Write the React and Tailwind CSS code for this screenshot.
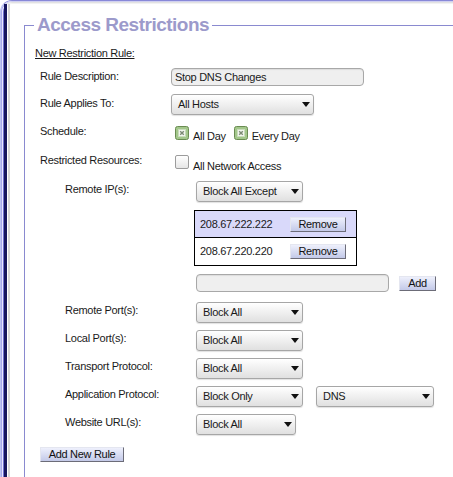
import React from 'react';

function Select({ value, className }) {
  return (
    <div className={`flex items-center h-[21px] rounded-[3px] border border-[#a6a6a6] bg-linear-to-b from-[#ffffff] to-[#e0e0e0] shadow-[0_1px_1px_rgba(0,0,0,0.12)] pl-[6px] text-[#1a1a1a] ${className}`}>
      <span>{value}</span>
      <svg className="ml-auto mr-[3px]" width="8" height="5" viewBox="0 0 8 5">
        <path d="M0 0H8L4 5Z" fill="#111" />
      </svg>
    </div>
  );
}

function CheckedBox() {
  return (
    <svg width="14" height="14" viewBox="0 0 14 14">
      <rect x="0.5" y="0.5" width="13" height="13" rx="2" fill="#a3c78b" stroke="#6a8c52" />
      <rect x="3.5" y="3.5" width="7" height="7" fill="#f3f7ef" stroke="#c9dcbc" />
      <path d="M5.2 5.2L8.8 8.8M8.8 5.2L5.2 8.8" stroke="#7c8a74" strokeWidth="1.4" />
    </svg>
  );
}

function Btn({ children, className }) {
  return (
    <div className={`flex items-center justify-center h-[15px] border border-t-[#e4e6f0] border-l-[#e4e6f0] border-r-[#6c6c78] border-b-[#6c6c78] bg-linear-to-b from-[#eef0fc] to-[#c3c9e8] text-[#111] leading-none ${className}`}>
      {children}
    </div>
  );
}

function Label({ children, className = '' }) {
  return <div className={`w-[131px] shrink-0 leading-[14px] ${className}`}>{children}</div>;
}

export default function App() {
  return (
    <div className="h-[477px] w-[453px] overflow-hidden bg-white font-['Liberation_Sans',Arial,sans-serif] text-[11px] tracking-[-0.3px] text-[#1a1a1a]">
      <div className="h-full border-l border-t border-l-[#bcc4f0] border-t-[#8888d8] rounded-tl-[12px]">
        <div className="h-full border-l border-t border-l-[#a8a8ec] border-t-[#d0d0f0] rounded-tl-[11px]">
          <div className="h-full border-l border-t border-l-[#e8e8ff] border-t-[#e2e2e2] rounded-tl-[10px]">
            <div className="h-full border-l border-t border-l-[#7070d0] border-t-[#f2f2f2] rounded-tl-[9px]">
              <div className="h-full border-l-[3px] border-[#16165e]">
                <div className="h-full border-l border-white">
                  <div className="h-full border-l-2 border-[#d6d6d6] pt-[10px] pl-[14px]">
                    <fieldset className="border-l border-t border-[#8a8ad0] pb-[40px]">
                      <legend className="ml-[9px] px-[3px] text-[19px] leading-[22px] font-bold tracking-[-0.5px] text-[#9c9acb]">
                        Access Restrictions
                      </legend>

                      <div className="mt-[10px] pl-[10px] leading-[14px] underline">New Restriction Rule:</div>

                      <div className="mt-[8px] pl-[15px] flex items-start">
                        <Label className="mt-[1px]">Rule Description:</Label>
                        <div className="h-[18px] w-[193px] rounded-[4px] border border-[#a8a8a8] bg-[#efefef] shadow-[inset_0_1px_1px_rgba(0,0,0,0.08)] pl-[3px] leading-[16px]">
                          Stop DNS Changes
                        </div>
                      </div>

                      <div className="mt-[8px] pl-[15px] flex items-start">
                        <Label className="mt-[2px]">Rule Applies To:</Label>
                        <Select value="All Hosts" className="w-[143px]" />
                      </div>

                      <div className="mt-[9px] pl-[15px] flex items-start">
                        <Label>Schedule:</Label>
                        <div className="ml-[4px] mt-[2px]"><CheckedBox /></div>
                        <span className="ml-[4px] mt-[5px] leading-[14px]">All Day</span>
                        <div className="ml-[8px] mt-[2px]"><CheckedBox /></div>
                        <span className="ml-[4px] mt-[5px] leading-[14px]">Every Day</span>
                      </div>

                      <div className="mt-[10px] pl-[15px] flex items-start">
                        <Label>Restricted Resources:</Label>
                        <div className="ml-[4px] mt-[2px] h-[14px] w-[14px] rounded-[2px] border border-[#9c9c9c] bg-linear-to-b from-[#ffffff] to-[#e6e6e6]" />
                        <span className="ml-[4px] mt-[6px] leading-[14px]">All Network Access</span>
                      </div>

                      <div className="mt-[8px] pl-[40px] flex items-start">
                        <Label className="mt-[1px]">Remote IP(s):</Label>
                        <Select value="Block All Except" className="w-[107px]" />
                      </div>

                      <div className="mt-[8px] pl-[169px]">
                        <div className="w-[163px] border border-black">
                          <div className="h-[27px] border-b border-black bg-[#d9d9fa] flex items-center pl-[5px]">
                            <span className="w-[90px]">208.67.222.222</span>
                            <Btn className="w-[56px]">Remove</Btn>
                          </div>
                          <div className="h-[27px] flex items-center pl-[5px]">
                            <span className="w-[90px]">208.67.220.220</span>
                            <Btn className="w-[56px]">Remove</Btn>
                          </div>
                        </div>
                      </div>

                      <div className="mt-[8px] pl-[171px] flex items-center">
                        <div className="h-[18px] w-[193px] rounded-[4px] border border-[#a8a8a8] bg-[#efefef] shadow-[inset_0_1px_1px_rgba(0,0,0,0.08)]" />
                        <Btn className="ml-[10px] w-[37px]">Add</Btn>
                      </div>

                      <div className="mt-[10px] pl-[40px] flex items-start">
                        <Label className="mt-[1px]">Remote Port(s):</Label>
                        <Select value="Block All" className="w-[107px]" />
                      </div>

                      <div className="mt-[7px] pl-[40px] flex items-start">
                        <Label className="mt-[1px]">Local Port(s):</Label>
                        <Select value="Block All" className="w-[107px]" />
                      </div>

                      <div className="mt-[7px] pl-[40px] flex items-start">
                        <Label className="mt-[1px]">Transport Protocol:</Label>
                        <Select value="Block All" className="w-[107px]" />
                      </div>

                      <div className="mt-[7px] pl-[40px] flex items-start">
                        <Label className="mt-[1px]">Application Protocol:</Label>
                        <Select value="Block Only" className="w-[107px]" />
                        <Select value="DNS" className="ml-[13px] w-[118px]" />
                      </div>

                      <div className="mt-[7px] pl-[40px] flex items-start">
                        <Label className="mt-[1px]">Website URL(s):</Label>
                        <Select value="Block All" className="w-[100px]" />
                      </div>

                      <div className="mt-[12px] pl-[15px] flex">
                        <Btn className="w-[84px]">Add New Rule</Btn>
                      </div>
                    </fieldset>
                  </div>
                </div>
              </div>
            </div>
          </div>
        </div>
      </div>
    </div>
  );
}
